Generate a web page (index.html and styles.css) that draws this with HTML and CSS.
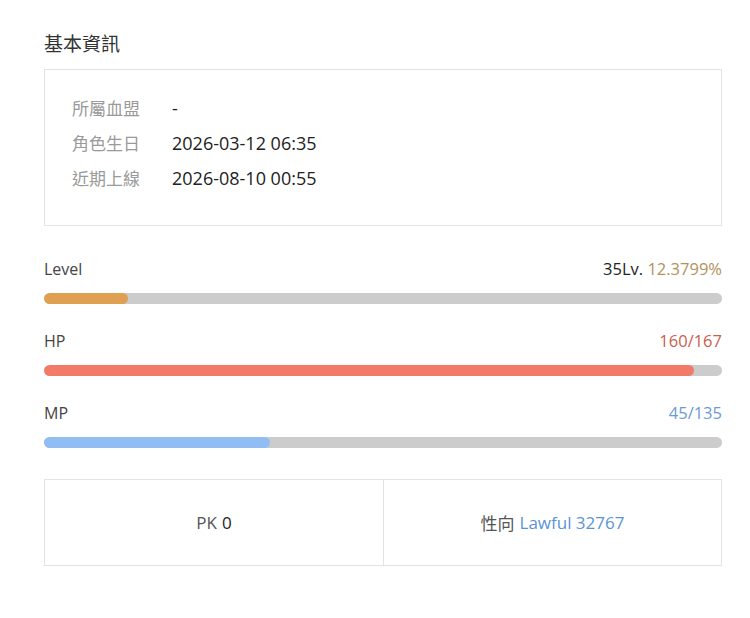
FILE: index.html
```html
<!DOCTYPE html>
<html lang="zh-Hant">
<head>
    <meta charset="UTF-8">
    <meta name="viewport" content="width=device-width, initial-scale=1.0">
    <title>角色資訊</title>
    <link rel="stylesheet" href="styles.css">
</head>
<body>
    <div class="panel">
        <h2 class="title">基本資訊</h2>
        <div class="info">
            <div class="info-row">
                <span class="info-label">所屬血盟</span>
                <span class="info-value">-</span>
            </div>
            <div class="info-row">
                <span class="info-label">角色生日</span>
                <span class="info-value">2026-03-12 06:35</span>
            </div>
            <div class="info-row">
                <span class="info-label">近期上線</span>
                <span class="info-value">2026-08-10 00:55</span>
            </div>
        </div>

        <div class="stat">
            <div class="stat-head">
                <span>Level</span>
                <span class="stat-num">35Lv. <span class="level-exp">12.3799%</span></span>
            </div>
            <div class="bar"><div class="fill fill-level" style="width: 12.38%"></div></div>
        </div>
        <div class="stat">
            <div class="stat-head">
                <span>HP</span>
                <span class="hp-text">160/167</span>
            </div>
            <div class="bar"><div class="fill fill-hp" style="width: 95.8%"></div></div>
        </div>
        <div class="stat">
            <div class="stat-head">
                <span>MP</span>
                <span class="mp-text">45/135</span>
            </div>
            <div class="bar"><div class="fill fill-mp" style="width: 33.3%"></div></div>
        </div>

        <div class="extra">
            <div class="extra-cell"><span class="extra-label">PK</span> <span class="extra-value">0</span></div>
            <div class="extra-cell"><span class="extra-label">性向</span> <span class="lawful">Lawful 32767</span></div>
        </div>
    </div>
</body>
</html>
```

FILE: styles.css
```css
:root {
    --border: #e3e3e3;
    --muted: #9a9a9a;
    --text: #222;
    --track: #cccccc;
}
body {
    margin: 0;
    background: #fff;
    color: var(--text);
    font-family: "Open Sans", "Noto Sans CJK TC", sans-serif;
    font-size: 16px;
}
.panel {
    padding: 31px 28px 40px 44px;
}
.title {
    margin: 0 0 12px;
    font-size: 19px;
    font-weight: 400;
    line-height: 26px;
    color: #333;
}
.info {
    border: 1px solid var(--border);
    padding: 21px 27px 29px;
}
.info-row {
    display: flex;
    align-items: baseline;
    line-height: 35px;
}
.info-label {
    width: 100px;
    font-size: 17px;
    color: var(--muted);
}
.info-value {
    font-size: 18px;
    color: var(--text);
}
.stat {
    margin-top: 31px;
}
.stat + .stat {
    margin-top: 25px;
}
.stat-head {
    display: flex;
    justify-content: space-between;
    line-height: 24px;
    color: #444;
    margin-bottom: 12px;
}
.stat-num,
.hp-text,
.mp-text {
    font-size: 16.5px;
}
.stat-num {
    color: var(--text);
}
.level-exp {
    color: #b3915c;
}
.hp-text {
    color: #c9604f;
}
.mp-text {
    color: #6b9bd6;
}
.bar {
    height: 11px;
    background: var(--track);
    border-radius: 6px;
    overflow: hidden;
}
.fill {
    height: 100%;
    border-radius: 6px;
}
.fill-level {
    background: #e0a052;
}
.fill-hp {
    background: #f27a66;
}
.fill-mp {
    background: #90bdf4;
}
.extra {
    margin-top: 31px;
    display: grid;
    grid-template-columns: 1fr 1fr;
    border: 1px solid var(--border);
}
.extra-cell {
    height: 85px;
    display: flex;
    align-items: center;
    justify-content: center;
    gap: 5px;
    font-size: 17px;
}
.extra-cell + .extra-cell {
    border-left: 1px solid var(--border);
}
.extra-label {
    color: #555;
}
.extra-value {
    color: var(--text);
}
.lawful {
    color: #5b93d6;
}
```
